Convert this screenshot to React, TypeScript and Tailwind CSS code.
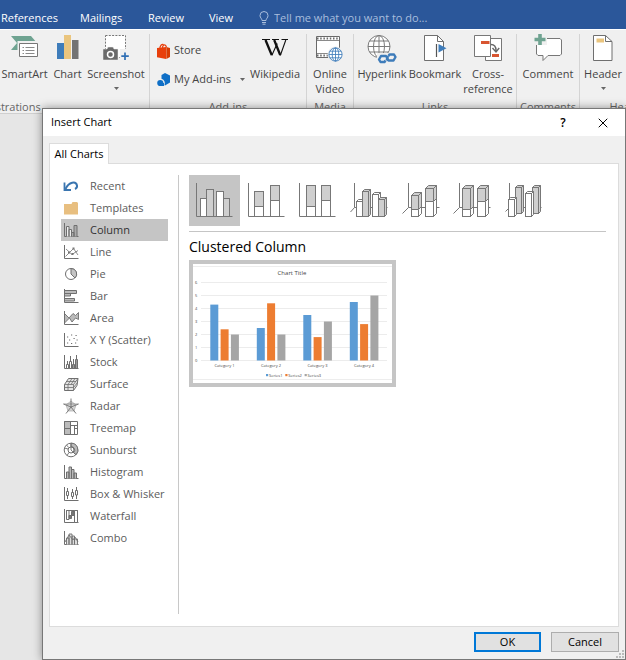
import React, { useState } from "react";
import { X } from "lucide-react";
import clsx from "clsx";

const G = "#6f6f6f";
const LIGHT = "#cfcfcf";

/* ---------- Ribbon icons ---------- */

const SmartArtIcon = () => (
  <svg width="28" height="26" viewBox="0 0 28 26" fill="none">
    <path d="M0 2h20l6 7-6 7H0l6-7z" fill="#6fa391" />
    <path d="M8 8.500h19.500v14.500H8z" fill="#fff" stroke="#f0f0f0" strokeWidth="3" />
    <path d="M8.500 9.500h18v13h-18z" fill="#fff" stroke="#777" />
    <path d="M11.500 13.500h1.500M11.500 16.500h1.500M11.500 19.500h1.500M14.500 13.500h9M14.500 16.500h9M14.500 19.500h9" stroke="#8a8a8a" />
  </svg>
);

const ChartIcon = () => (
  <svg width="22" height="26" viewBox="0 0 22 26">
    <path d="M0 9h7v16H0z" fill="#3e7cba" />
    <path d="M7 1h7v24H7z" fill="#eac57e" />
    <path d="M15 6h6.500v19H15z" fill="#737373" />
  </svg>
);

const ScreenshotIcon = () => (
  <svg width="26" height="27" viewBox="0 0 26 27" fill="none">
    <path d="M2.500 1.500h20v22h-20z" fill="#fff" stroke="#777" strokeDasharray="2 1.300" />
    <path d="M17 15h9v12h-9z" fill="#f0f0f0" />
    <path d="M0 15h4l1-2h5l1 2h4v11H0z" fill="#6a6a6a" stroke="#f0f0f0" strokeWidth=".5" />
    <circle cx="7.500" cy="20.500" r="3" stroke="#fff" strokeWidth="1.500" />
    <path d="M22 18.500v7.500M18.300 22.200h7.500" stroke="#2f6fb4" strokeWidth="1.700" />
  </svg>
);

const StoreIcon = () => (
  <svg width="14" height="16" viewBox="0 0 14 16" fill="none">
    <path d="M0 5l9-1v12l-9-1.800z" fill="#e83f0b" />
    <path d="M9.300 4l3.700 1v9l-3.700 2z" fill="#d83b01" />
    <path d="M3 6.500C2.500 2.500 5 .8 6.500 1.500M5.500 6C5 2 8.500 0 9.500 4.500" stroke="#e83f0b" strokeWidth="1.200" />
  </svg>
);

const AddinsIcon = () => (
  <svg width="14" height="14" viewBox="0 0 14 14">
    <path d="M8 0l5 2.500v7L8 12.500 4.500 10V2z" fill="#0f6fc6" />
    <circle cx="3.500" cy="10" r="4.300" fill="#f0f0f0" />
    <circle cx="3.300" cy="10" r="3.100" fill="#0f6fc6" />
    <path d="M3.300 10H7v3H3.300z" fill="#0f6fc6" />
  </svg>
);

const WikipediaIcon = () => (
  <svg width="26" height="26" viewBox="0 0 26 26" fill="none" stroke="#111">
    <path d="M0 5.500h8M10 5.500h7M19.500 5.500H26" strokeWidth="1" />
    <path d="M3.500 6l6.200 15M12.200 6l6 15" strokeWidth="2.300" />
    <path d="M9.800 21.500L15.200 9.500M18.300 21.500L23.800 6" strokeWidth="1.100" />
  </svg>
);

const Globe = ({ color }: { color: string }) => (
  <g stroke={color} fill="none">
    <circle r="11" fill="#fff" />
    <ellipse rx="5.500" ry="11" />
    <path d="M0-11v22M-11 0h22M-9.500-5.500h19M-9.500 5.500h19" />
  </g>
);

const OnlineVideoIcon = () => (
  <svg width="28" height="28" viewBox="0 0 28 28" fill="none">
    <path d="M.5 2.500h23v21H.5z" fill="#fff" stroke="#6a6a6a" />
    <path d="M1 4.500h22M1 21.500h22" stroke="#6a6a6a" strokeWidth="2" strokeDasharray="1.500 1.700" />
    <path d="M1 6.500h22M1 19.500h22" stroke="#8a8a8a" />
    <circle cx="19.500" cy="20.500" r="8" fill="#f0f0f0" />
    <g transform="translate(19.500 20.500) scale(.6)" strokeWidth="1.400">
      <Globe color="#3e7cba" />
    </g>
  </svg>
);

const HyperlinkIcon = () => (
  <svg width="30" height="30" viewBox="0 0 30 30" fill="none">
    <g transform="translate(12 12.500)">
      <Globe color="#7b7b7b" />
    </g>
    <path d="M10 19h20v11H10z" fill="#f0f0f0" />
    <g stroke="#3e7cba" strokeWidth="2.400" strokeLinejoin="round">
      <path d="M18.500 26.500l-1 1.500h-4l-1.500-2.500 2-3.500h5l1.500 2.500-1 2" />
      <path d="M21.500 22l1-1.500h4.500l1.500 2.500-2 3.500h-5l-1.500-2 1-2.500" />
    </g>
  </svg>
);

const BookmarkIcon = () => (
  <svg width="24" height="28" viewBox="0 0 24 28" fill="none">
    <path d="M1.500 1.500h13l6 6v19h-19z" fill="#fff" stroke="#6f6f6f" />
    <path d="M14.500 1.500v6h6" stroke="#6f6f6f" />
    <path d="M12 9h8v10h-8z" fill="#fff" />
    <path d="M13.500 10v13" stroke="#555" strokeWidth="1.200" />
    <path d="M15.500 10l8 4.200-8 4.200z" fill="#3e7cba" />
  </svg>
);

const CrossReferenceIcon = () => (
  <svg width="28" height="28" viewBox="0 0 28 28" fill="none">
    <path d="M11.500 4.500h16v22h-16z" fill="#fff" stroke="#777" />
    <path d="M.5 1.500h16v21H.5z" fill="#fff" stroke="#777" />
    <path d="M7 8.500h8.500" stroke="#d85531" strokeWidth="3" />
    <path d="M18 21.500h7" stroke="#d85531" strokeWidth="3" />
    <path d="M17 10.500c4 0 5 2 5 6M18.500 14l3.500 4 3.200-4" stroke="#666" strokeWidth="1.400" />
  </svg>
);

const CommentIcon = () => (
  <svg width="28" height="28" viewBox="0 0 28 28" fill="none">
    <path d="M4 4.500h22l1.500 1.500v14L26 21.500H14l-5 5v-5H4L2.500 20V6z" fill="#fff" stroke="#777" />
    <path d="M0 0h13v11H0z" fill="#f0f0f0" />
    <path d="M6 0v11M.5 5.500h11" stroke="#6fa391" strokeWidth="3.600" />
  </svg>
);

const HeaderIcon = () => (
  <svg width="20" height="28" viewBox="0 0 20 28" fill="none">
    <path d="M.5 1.500h12l6.500 6v19H.5z" fill="#fff" stroke="#6f6f6f" />
    <path d="M12.500 1.500v6H19" stroke="#6f6f6f" />
    <path d="M3.500 4.500H11v4H3.500z" fill="#eac57e" />
  </svg>
);

const Caret = () => (
  <svg width="5" height="3" viewBox="0 0 5 3">
    <path d="M0 0h5L2.500 3z" fill="#666" />
  </svg>
);

/* ---------- Chart type list icons, on a 16px grid ---------- */

const listIcons: Record<string, React.ReactNode> = {
  Recent: (
    <>
      <path d="M2.500 11C6 3.500 13 3 14 7.500c.3 1.500-.5 2.800-2 3.500" stroke="#3a75b0" strokeWidth="2" />
      <path d="M1.500 4.500v7.500H8" stroke="#3a75b0" strokeWidth="1.800" />
    </>
  ),
  Templates: <path d="M1 4h7.500l1-2H14l1 1v11.500H1z" fill="#e8bf80" stroke="none" />,
  Column: (
    <>
      <path d="M1.500 1v13.500H15.500" />
      <path d="M3.500 14.500v-10h2.500v10M6 14.500v-7h2.500v7" fill="#eee" />
      <path d="M8.500 14.500v-4H11v4M11 14.500V3.500h3v11" fill="#aaa" />
    </>
  ),
  Line: (
    <>
      <path d="M1.500 1v13.500H15.500" />
      <path d="M2.500 12.500l8-8 4.500 6.500M3 5l6 5.500 6-4" strokeWidth=".8" />
      <path d="M5 7.500h2v2H5zM9.500 3.500h2v2h-2zM8.500 9h2v2h-2z" fill="#777" stroke="none" />
    </>
  ),
  Pie: (
    <>
      <circle cx="8" cy="8" r="5.500" />
      <path d="M8 2.500V8l4 4A5.500 5.500 0 0 0 8 2.500z" fill="#c4c4c4" />
    </>
  ),
  Bar: (
    <>
      <path d="M1.500 1v13.500H15.500" />
      <path d="M1.500 2.500h12v3h-12zM1.500 5.500h6v2.500h-6zM1.500 10.500h10v2.500h-10z" fill="#bbb" />
    </>
  ),
  Area: (
    <>
      <path d="M1.500 3.500L6 8l4-4.500 2.500 2 3-3v7L12.500 8 9 12 6.500 8l-5 5z" fill="#bbb" strokeWidth=".9" />
      <path d="M1.500 1v13.500H15.500" />
    </>
  ),
  "X Y (Scatter)": (
    <>
      <path d="M1.500 1v13.500H15.500" />
      <path
        d="M4 5h1.200M8 3h1.200M12.500 3.500h1.200M6 8h1.200M10.500 6.500h1.200M13.500 8h1.200M4 11h1.200M8 11.500h1.200M12 11h1.200"
        strokeWidth="1.200"
      />
    </>
  ),
  Stock: (
    <>
      <path d="M1.500 1v13.500H15.500M4.500 7v3M7.500 2v5M10.500 5v5M13.500 1v6" />
      <path d="M3.500 10.500h2v4h-2zM6.500 7.500h2v7h-2z" fill="#fff" />
      <path d="M9.500 10.500h2v4h-2zM12.500 5.500h2v9h-2z" fill="#999" />
    </>
  ),
  Surface: (
    <>
      <path d="M1.500 8.500l4-6H15l-1 7-3.500 5h-9z" fill="#e4e4e4" />
      <path d="M1.500 8.500h9L15 2.500M10.500 8.500v6M3.500 5.500H13M9 2.500l-4 6v6M12 2.500l-4 6M1.500 11.500h9l4-5" strokeWidth=".8" />
    </>
  ),
  Radar: (
    <>
      <path d="M8 3l5 4-2 6H5L3 7z" fill="#d4d4d4" stroke="#aaa" strokeWidth=".7" />
      <path d="M8 .5V9M.5 6L8 9l7.500-3M3 15.500L8 9l5 6.500" strokeWidth=".9" />
      <path d="M.5 6h15" strokeWidth=".6" />
    </>
  ),
  Treemap: (
    <>
      <path d="M1.500 1.500h13v13h-13z" fill="#fff" />
      <path d="M1.500 1.500h6v7h-6zM1.500 8.500h6v6h-6z" fill="#bbb" />
      <path d="M7.500 5.500h7M11.500 5.500v9M11.500 8.500h3" />
    </>
  ),
  Sunburst: (
    <>
      <circle cx="8" cy="8" r="6.800" />
      <path d="M8 1.200v3.600A3.200 3.200 0 0 1 10.500 10.500l2.500 2.300A6.800 6.800 0 0 0 8 1.200z" fill="#bbb" />
      <circle cx="8" cy="8" r="3" fill="#fff" />
      <path d="M8 1.200V8l5 4.800M1.500 6l3.500 1M4 13.500l2-3M3.500 3l2.200 2.500" strokeWidth=".9" />
    </>
  ),
  Histogram: (
    <>
      <path d="M1.500 1v13.500H15.500" />
      <path d="M3.500 14.500V8h2.500v6.500M6 14.500V3h2.500v11.500M8.500 14.500V5.500H11v9M11 14.500V9h2.500v5.500" fill="#bbb" />
    </>
  ),
  "Box & Whisker": (
    <>
      <path d="M1.500 1v13.500H15.500" />
      <path d="M4.500 2v11M9.500 3v10M13.500 1v12" />
      <path d="M3.500 5.500h2v4h-2zM8.500 6.500h2v4h-2zM12.500 4.500h2v4.500h-2z" fill="#fff" />
    </>
  ),
  Waterfall: (
    <>
      <path d="M1.500 1v13.500H15.500M3 2.500h12" />
      <path d="M3.500 2.500h2.500v9h-2.500zM11.500 2.500h3v12h-3z" fill="#fff" />
      <path d="M6 7.500h2.500v3H6zM8.500 3.500H11v4H8.500z" fill="#777" />
    </>
  ),
  Combo: (
    <>
      <path d="M1.500 1v13.500H15.500" />
      <path d="M3.500 14.500V8h2.500v6.500M6 14.500V4h3v10.500M9 14.500V6h2.500v8.500M11.500 14.500V9h3v5.500" fill="#ddd" strokeWidth=".9" />
      <path d="M2 12l4-7 4 5 2-3 3 5" strokeWidth=".9" />
    </>
  ),
};

/* ---------- Column subtype icons ---------- */

type BarProps = {
  x: number;
  y: number;
  w: number;
  bottom?: number;
  depth?: number;
  split?: number;
  fill?: string;
};

const Column = ({ x, y, w, bottom = 41.5, depth = 0, split, fill = "#fff" }: BarProps) => (
  <g>
    {depth > 0 && (
      <>
        <path d={`M${x} ${y}l${depth}-${depth}h${w}l-${depth} ${depth}z`} fill={fill} />
        <path d={`M${x + w} ${y}l${depth}-${depth}V${bottom - depth}L${x + w} ${bottom}z`} fill={fill} />
      </>
    )}
    <rect x={x} y={y} width={w} height={bottom - y} fill={fill} />
    {split && (
      <>
        <rect x={x} y={split} width={w} height={bottom - split} fill="#fff" />
        {depth > 0 && (
          <path d={`M${x + w} ${split}l${depth}-${depth}V${bottom - depth}L${x + w} ${bottom}z`} fill="#fff" />
        )}
      </>
    )}
  </g>
);

const subtypes = [
  {
    name: "Clustered Column",
    axis: "M7.500 8v33.500h36",
    bars: [
      { x: 11.5, y: 23.5, w: 6 },
      { x: 17.5, y: 14.5, w: 7, fill: LIGHT },
      { x: 27.5, y: 16.5, w: 7 },
      { x: 34.5, y: 23.5, w: 6, fill: LIGHT },
    ],
  },
  {
    name: "Stacked Column",
    axis: "M8.500 8v33.500h36",
    bars: [
      { x: 14.5, y: 16.5, w: 9, split: 31.5, fill: LIGHT },
      { x: 30.5, y: 10.5, w: 9, split: 25.5, fill: LIGHT },
    ],
  },
  {
    name: "100% Stacked Column",
    axis: "M8.500 8v33.500h36",
    bars: [
      { x: 15.5, y: 10.5, w: 9, split: 31.5, fill: LIGHT },
      { x: 30.5, y: 10.5, w: 9, split: 25.5, fill: LIGHT },
    ],
  },
  {
    name: "3-D Clustered Column",
    axis: "M12.500 8v24.500h33M12.500 32.500L8.500 37",
    bars: [
      { x: 14.5, y: 26.5, w: 6, depth: 2 },
      { x: 20.5, y: 16.5, w: 6, depth: 2, fill: LIGHT },
      { x: 30.5, y: 19.5, w: 6, depth: 2 },
      { x: 36.5, y: 24.5, w: 6, depth: 2, fill: LIGHT },
    ],
  },
  {
    name: "3-D Stacked Column",
    axis: "M15.500 8v24.500h31M15.500 32.500l-6 6",
    bars: [
      { x: 18.5, y: 20.5, w: 7, depth: 3, split: 34.5, fill: LIGHT },
      { x: 32.5, y: 13.5, w: 8, depth: 3, split: 26.5, fill: LIGHT },
    ],
  },
  {
    name: "3-D 100% Stacked Column",
    axis: "M15.500 8v24.500h31M15.500 32.500l-6 6",
    bars: [
      { x: 18.5, y: 13.5, w: 8, depth: 3, split: 34.5, fill: LIGHT },
      { x: 33.5, y: 13.5, w: 8, depth: 3, split: 26.5, fill: LIGHT },
    ],
  },
  {
    name: "3-D Column",
    axis: "M14.500 8v24.500h32M14.500 32.500l-4 4",
    bars: [
      { x: 20.5, y: 12.5, w: 6, bottom: 38.5, depth: 2, fill: LIGHT },
      { x: 13.5, y: 24.5, w: 6, depth: 2 },
      { x: 37.5, y: 12.5, w: 6, bottom: 38.5, depth: 2, fill: LIGHT },
      { x: 30.5, y: 18.5, w: 6, depth: 2 },
    ],
  },
];

/* ---------- Preview chart ---------- */

const series = [
  { name: "Series1", color: "#5b9bd5", values: [4.3, 2.5, 3.5, 4.5] },
  { name: "Series2", color: "#ed7d31", values: [2.4, 4.4, 1.8, 2.8] },
  { name: "Series3", color: "#a5a5a5", values: [2, 2, 3, 5] },
];

const PreviewChart = () => (
  <svg className="block w-full" viewBox="0 0 199 119" fontFamily="'Open Sans', sans-serif" fill="#444">
    <path d="M0 2.500h199M0 115.500h199" stroke="#ededed" />
    <text x="99" y="11" fontSize="6" textAnchor="middle">
      Chart Title
    </text>
    {[0, 1, 2, 3, 4, 5, 6].map((v) => (
      <g key={v}>
        <path d={`M8 ${96.5 - 13 * v}h186`} stroke="#ececec" />
        <text x="2" y={98 - 13 * v} fontSize="4">
          {v}
        </text>
      </g>
    ))}
    {series.map((s, i) =>
      s.values.map((v, j) => (
        <rect
          key={`${i}-${j}`}
          x={17.3 + 46.5 * j + 10.3 * i}
          y={96.5 - 13 * v}
          width="8"
          height={13 * v}
          fill={s.color}
        />
      ))
    )}
    {[1, 2, 3, 4].map((n) => (
      <text key={n} x={31.5 + 46.5 * (n - 1)} y="103" fontSize="4" textAnchor="middle">
        Category {n}
      </text>
    ))}
    {series.map((s, i) => (
      <g key={s.name}>
        <rect x={73 + 19.3 * i} y="110" width="2.200" height="2.200" fill={s.color} />
        <text x={76 + 19.3 * i} y="112.500" fontSize="4">
          {s.name}
        </text>
      </g>
    ))}
  </svg>
);

/* ---------- Ribbon ---------- */

const Group = ({ label, className, children }: { label: string; className: string; children: React.ReactNode }) => (
  <div className={clsx("flex shrink-0 flex-col", className)}>
    <div className="flex h-[65px] shrink-0">{children}</div>
    <div className="text-center text-[11px] leading-4 whitespace-nowrap text-[#666]">{label}</div>
  </div>
);

type ToolProps = { icon: React.ReactNode; label: string; caret?: boolean; className: string };

const Tool = ({ icon, label, caret, className }: ToolProps) => (
  <button className={clsx("flex shrink-0 flex-col items-center", className)}>
    <span className="flex h-8 items-start justify-center">{icon}</span>
    <span className="text-[11px] leading-[15px] whitespace-pre-line">{label}</span>
    {caret && (
      <span className="mt-1.5">
        <Caret />
      </span>
    )}
  </button>
);

const Ribbon = () => (
  <div className="flex h-[85px] overflow-hidden border-t border-b border-t-white border-b-[#cfcfcf] bg-[#f0f0f0] pt-1 text-[#444]">
    <Group label="Illustrations" className="-ml-[128px] w-[278px] border-r border-[#d4d4d4]">
      <div className="w-32" />
      <Tool icon={<SmartArtIcon />} label="SmartArt" className="w-[49px]" />
      <Tool icon={<ChartIcon />} label="Chart" className="w-[37px]" />
      <Tool icon={<ScreenshotIcon />} label="Screenshot" caret className="w-[60px]" />
    </Group>
    <Group label="Add-ins" className="w-[157px] border-r border-[#d4d4d4]">
      <div className="flex w-[95px] flex-col pt-0.5 pl-[7px] text-[11px]">
        <button className="flex h-[29px] items-center gap-[3px]">
          <StoreIcon />
          Store
        </button>
        <button className="flex h-[29px] items-center gap-[3px]">
          <AddinsIcon />
          My Add-ins
          <span className="ml-auto">
            <Caret />
          </span>
        </button>
      </div>
      <Tool icon={<WikipediaIcon />} label="Wikipedia" className="w-[60px]" />
    </Group>
    <Group label="Media" className="w-[47px] border-r border-[#d4d4d4]">
      <Tool icon={<OnlineVideoIcon />} label={"Online\nVideo"} className="w-[46px]" />
    </Group>
    <Group label="Links" className="w-[163px] border-r border-[#d4d4d4]">
      <Tool icon={<HyperlinkIcon />} label="Hyperlink" className="w-14" />
      <Tool icon={<BookmarkIcon />} label="Bookmark" className="w-[50px]" />
      <Tool icon={<CrossReferenceIcon />} label={"Cross-\nreference"} className="w-14" />
    </Group>
    <Group label="Comments" className="w-[63px] border-r border-[#d4d4d4]">
      <Tool icon={<CommentIcon />} label="Comment" className="w-[62px]" />
    </Group>
    <Group label="Header & Footer" className="w-36">
      <Tool icon={<HeaderIcon />} label="Header" caret className="w-[46px]" />
    </Group>
  </div>
);

/* ---------- Dialog ---------- */

const InsertChartDialog = () => {
  const [category, setCategory] = useState("Column");
  const [subtype, setSubtype] = useState("Clustered Column");

  return (
    <div
      role="dialog"
      aria-label="Insert Chart"
      className="absolute top-[108px] right-0 bottom-0 left-[42px] flex flex-col border border-[#777] bg-[#f0f0f0] text-black shadow-[0_0_9px_rgba(0,0,0,0.4)]"
    >
      <div className="flex h-[27px] shrink-0 items-center bg-white pr-3.5 pl-2">
        <h1 className="text-[11px]">Insert Chart</h1>
        <button aria-label="Help" className="ml-auto w-4 text-[12px] font-semibold">
          ?
        </button>
        <button aria-label="Close" className="ml-6">
          <X size={16} strokeWidth={1.5} />
        </button>
      </div>

      <div className="flex min-h-0 grow flex-col px-1.5 pt-[7px]">
        <div role="tablist" className="flex">
          <button
            role="tab"
            aria-selected="true"
            className="relative z-10 -mb-px h-[21px] w-[60px] border border-b-0 border-[#dcdcdc] bg-white text-[11px] leading-4 whitespace-nowrap"
          >
            All Charts
          </button>
        </div>

        <div className="flex grow border border-[#dcdcdc] bg-white pt-[11px] pr-3 pb-3 pl-[11px]">
          <ul className="w-[107px] shrink-0 text-[#5c5c5c]">
            {Object.keys(listIcons).map((name) => (
              <li key={name}>
                <button
                  onClick={() => setCategory(name)}
                  className={clsx(
                    "flex h-[22px] w-full items-center gap-[11px] pl-0.5 text-[11px] whitespace-nowrap",
                    category === name && "bg-[#c5c5c5] text-[#333]"
                  )}
                >
                  <svg className="shrink-0" width="16" height="16" viewBox="0 0 16 16" fill="none" stroke={G}>
                    {listIcons[name]}
                  </svg>
                  {name}
                </button>
              </li>
            ))}
          </ul>

          <div className="ml-2.5 grow border-l border-[#c8c8c8] pl-2.5">
            <div className="flex border-b border-[#c5c5c5] pb-[5px]">
              {subtypes.map((s) => (
                <button
                  key={s.name}
                  aria-label={s.name}
                  onClick={() => setSubtype(s.name)}
                  className={clsx("w-[51px]", subtype === s.name && "bg-[#c5c5c5]")}
                >
                  <svg width="51" height="51" viewBox="0 0 51 51" fill="none" stroke="#777">
                    <path d={s.axis} />
                    {s.bars.map((b, i) => (
                      <Column key={i} {...b} />
                    ))}
                  </svg>
                </button>
              ))}
            </div>
            <h2 className="mt-[5px] text-[14px] leading-5">{subtype}</h2>
            <button aria-label="Chart preview" className="mt-[3px] w-[207px] border-4 border-[#c5c5c5] bg-white">
              <PreviewChart />
            </button>
          </div>
        </div>

        <div className="flex h-8 shrink-0 items-start justify-end gap-2.5 pt-[5px] text-[11px]">
          <button className="h-5 w-[67px] border-2 border-[#0078d7] bg-[#e1e1e1] leading-4">OK</button>
          <button className="h-5 w-[68px] border border-[#adadad] bg-[#e1e1e1] leading-[18px]">Cancel</button>
        </div>
      </div>

      <svg className="absolute right-px bottom-px" width="8" height="8" viewBox="0 0 8 8" fill="#bbb">
        <path d="M6 0h2v2H6zM3 3h2v2H3zM6 3h2v2H6zM0 6h2v2H0zM3 6h2v2H3zM6 6h2v2H6z" />
      </svg>
    </div>
  );
};

const tabs = [
  { name: "References", className: "w-[79px]" },
  { name: "Mailings", className: "w-[68px]" },
  { name: "Review", className: "w-[61px]" },
  { name: "View", className: "w-[50px]" },
];

const App = () => (
  <div className="relative min-h-screen overflow-hidden bg-[#e6e6e6] font-['Open_Sans',sans-serif]">
    <header className="flex h-[29px] items-end bg-[#2b579a] pb-[3px] pl-px text-[11px] leading-4 text-white">
      {tabs.map((t) => (
        <button key={t.name} className={clsx("text-left", t.className)}>
          {t.name}
        </button>
      ))}
      <label className="flex grow items-center gap-[5px]">
        <svg width="10" height="14" viewBox="0 0 10 14" fill="none" stroke="#a9bedd">
          <path d="M3 9.500C3 7.500 1 7 1 4.500a4 4 0 0 1 8 0C9 7 7 7.500 7 9.500zM3 11.500h4M3.500 13.200h3" />
        </svg>
        <input
          aria-label="Tell me what you want to do"
          placeholder="Tell me what you want to do..."
          className="grow bg-transparent outline-none placeholder:text-[#a9bedd]"
        />
      </label>
    </header>
    <Ribbon />
    <InsertChartDialog />
  </div>
);

export default App;
